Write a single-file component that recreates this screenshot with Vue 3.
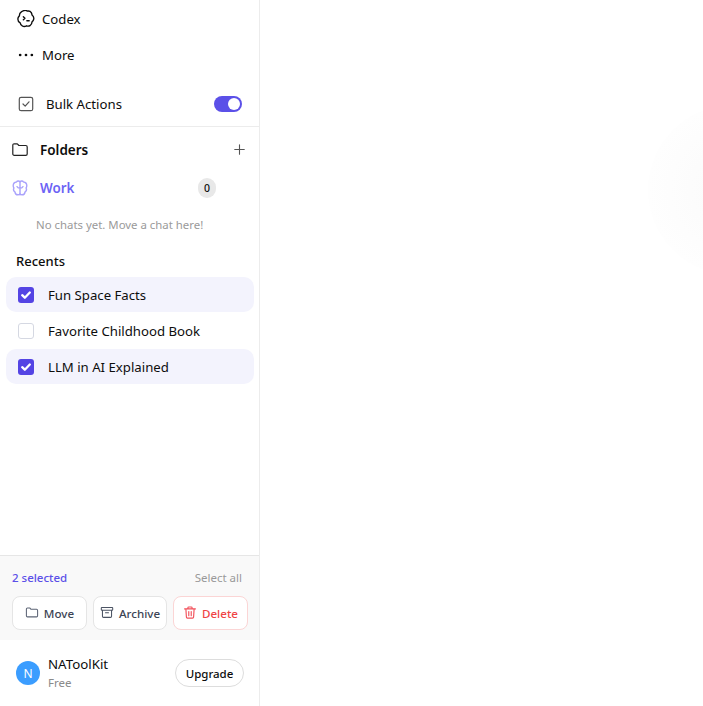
<template>
  <div class="page">
    <aside class="sidebar">
      <div class="nav-top">
        <div class="nav-row">
          <svg class="nav-icon" viewBox="1.500 1.500 17 17" fill="none" stroke="#0d0d0d" stroke-width="1.300" stroke-linejoin="round" stroke-linecap="round">
            <path d="M7.200 2.400c1.500-.9 3-.6 4.200.1 1.200-.2 2.800.2 3.600 1.500.5.900.6 1.600.7 2.300 1.200 1 1.900 2.300 1.600 3.800-.2 1.200-.9 2-1.700 2.700.1 1.400-.6 2.700-1.800 3.400-1.100.7-2.300.6-3.300.2-1.200.8-2.700.9-4 .2-1.200-.6-1.800-1.700-2-2.900C3.300 13 2.300 11.600 2.300 10c0-1.300.7-2.300 1.500-3.100-.1-1.400.6-2.800 1.800-3.600.5-.4 1-.6 1.600-.9z" />
            <path d="M7.500 7.800l1.500 1.500-1.500 1.500M10.800 11.600h2.200" />
          </svg>
          <span>Codex</span>
        </div>
        <div class="nav-row">
          <svg class="nav-icon" viewBox="0 0 20 20" fill="#0d0d0d">
            <circle cx="3.500" cy="10" r="1.500" />
            <circle cx="10" cy="10" r="1.500" />
            <circle cx="16.500" cy="10" r="1.500" />
          </svg>
          <span>More</span>
        </div>
      </div>

      <div class="bulk-row">
        <svg class="bulk-icon" viewBox="0 0 16 16" fill="none" stroke="#555" stroke-width="1.200" stroke-linecap="round" stroke-linejoin="round">
          <rect x="1.300" y="1.300" width="13.400" height="13.400" rx="1.800" />
          <path d="M5 8l2.200 2.200L11 5.800" />
        </svg>
        <span class="bulk-label">Bulk Actions</span>
        <span class="toggle"><span class="knob"></span></span>
      </div>

      <div class="folders">
        <div class="folders-head">
          <svg class="folder-icon" viewBox="0 0 16 16" fill="none" stroke="#222" stroke-width="1.200" stroke-linejoin="round">
            <path d="M.8 3.200c0-.8.600-1.400 1.400-1.400h3.100l1.600 1.700h6.900c.8 0 1.400.6 1.400 1.400v7c0 .8-.6 1.400-1.400 1.400H2.200c-.8 0-1.400-.6-1.400-1.400z" />
          </svg>
          <strong class="folders-title">Folders</strong>
          <svg class="plus" viewBox="0 0 12 12" fill="none" stroke="#555" stroke-width="1.200" stroke-linecap="round">
            <path d="M6 .8v10.400M.8 6h10.400" />
          </svg>
        </div>
        <div class="folder-row">
          <svg class="folder-icon" viewBox="0 0 16 16" fill="none" stroke="#a9a2fb" stroke-width="1.400" stroke-linecap="round" stroke-linejoin="round">
            <path d="M8 1.800C7.200 .7 5.200 .7 4.500 2 2.700 2.200 1.200 3.700 1.200 5.800c0 .9.300 1.600.7 2.200-.6 1.300-.2 3.100 1 3.800.2 1.700 1.500 3 3 3 .9 0 1.700-.4 2.100-1 .4.600 1.200 1 2.100 1 1.500 0 2.800-1.300 3-3 1.200-.7 1.600-2.500 1-3.800.4-.6.700-1.300.7-2.200 0-2.100-1.500-3.600-3.300-3.800C10.800 .7 8.800 .7 8 1.800z" />
            <path d="M8 1.800v12.900M5 6.600c.4 1.100 1.500 1.700 3 1.700s2.600-.6 3-1.700" />
          </svg>
          <strong class="work">Work</strong>
          <span class="count">0</span>
        </div>
        <p class="empty">No chats yet. Move a chat here!</p>
      </div>

      <h3 class="recents-title">Recents</h3>
      <ul class="chats">
        <li v-for="chat in chats" :key="chat.title" class="chat" :class="{ selected: chat.selected }">
          <span class="check">
            <svg v-if="chat.selected" viewBox="0 0 16 16" fill="none" stroke="#fff" stroke-width="2.300" stroke-linecap="round" stroke-linejoin="round">
              <path d="M4.200 8.200l2.600 2.500 5-5.200" />
            </svg>
          </span>
          <span>{{ chat.title }}</span>
        </li>
      </ul>

      <div class="bulk-bar">
        <div class="bulk-info">
          <span class="selected-count">2 selected</span>
          <span class="select-all">Select all</span>
        </div>
        <div class="bulk-buttons">
          <button class="action move">
            <svg viewBox="0 0 16 16" fill="none" stroke="#5c6475" stroke-width="1.200" stroke-linejoin="round">
              <path d="M1.600 3.400c0-.7.500-1.200 1.200-1.200h2.600l1.500 1.600h6.300c.7 0 1.200.5 1.200 1.200v6.200c0 .7-.5 1.200-1.200 1.200H2.800c-.7 0-1.200-.5-1.200-1.200z" />
            </svg>
            Move
          </button>
          <button class="action archive">
            <svg viewBox="0 0 16 16" fill="none" stroke="#4b5363" stroke-width="1.200" stroke-linejoin="round" stroke-linecap="round">
              <rect x="1.500" y="1.800" width="13" height="3" rx=".6" />
              <path d="M2.800 4.800v7c0 .7.500 1.200 1.200 1.200h8c.7 0 1.200-.5 1.200-1.200v-7M6.300 7.800h3.400" />
            </svg>
            Archive
          </button>
          <button class="action delete">
            <svg viewBox="0 0 16 16" fill="none" stroke="#f2505a" stroke-width="1.300" stroke-linejoin="round" stroke-linecap="round">
              <path d="M1.800 3.300h12.400M5.600 3.300V2.100c0-.6.400-1 1-1h2.800c.6 0 1 .4 1 1v1.200M3.300 3.300l.6 9.400c0 .7.500 1.200 1.200 1.200h5.800c.7 0 1.200-.5 1.200-1.200l.6-9.400M6.600 6.300v4.800M9.400 6.300v4.800" />
            </svg>
            Delete
          </button>
        </div>
      </div>

      <div class="account">
        <span class="avatar">N</span>
        <div class="account-text">
          <span class="account-name">NAToolKit</span>
          <span class="account-plan">Free</span>
        </div>
        <button class="upgrade">Upgrade</button>
      </div>
    </aside>
    <main class="content">
      <div class="glow"></div>
    </main>
  </div>
</template>

<script setup>
import { ref } from 'vue';

const chats = ref([
  { title: 'Fun Space Facts', selected: true },
  { title: 'Favorite Childhood Book', selected: false },
  { title: 'LLM in AI Explained', selected: true },
]);
</script>

<style>
html, body {
  margin: 0;
  background: #fff;
}
</style>

<style scoped>
.page {
  display: flex;
  width: 703px;
  height: 706px;
  overflow: hidden;
  font-family: "Noto Sans", "Open Sans", sans-serif;
  font-size: 13.200px;
  color: #0d0d0d;
}

.sidebar {
  display: flex;
  flex-direction: column;
  width: 260px;
  flex-shrink: 0;
  box-sizing: border-box;
  border-right: 1px solid #ececec;
  background: #fff;
}

.nav-top {
  padding-top: 1px;
}

.nav-row {
  display: flex;
  align-items: center;
  gap: 7px;
  height: 36px;
  padding-left: 17px;
}

.nav-icon {
  width: 18px;
  height: 18px;
}

.bulk-row {
  display: flex;
  align-items: center;
  height: 41px;
  margin-top: 13px;
  padding: 0 17px 4px 18px;
  box-sizing: border-box;
  border-bottom: 1px solid #ececec;
}

.bulk-icon {
  width: 16px;
  height: 16px;
}

.bulk-label {
  margin-left: 12px;
  flex: 1;
}

.toggle {
  display: flex;
  justify-content: flex-end;
  align-items: center;
  width: 28px;
  height: 16px;
  padding: 2px;
  box-sizing: border-box;
  border-radius: 8px;
  background: #5b50e8;
}

.knob {
  width: 12px;
  height: 12px;
  border-radius: 50%;
  background: #fff;
}

.folders-head {
  display: flex;
  align-items: center;
  height: 38px;
  padding: 4px 14px 0 12px;
}

.folder-icon {
  width: 16px;
  height: 16px;
}

.folders-title {
  margin-left: 12px;
  flex: 1;
  font-size: 13.500px;
  font-weight: 600;
}

.plus {
  width: 11px;
  height: 11px;
  margin-bottom: 2px;
}

.folder-row {
  display: flex;
  align-items: center;
  height: 38px;
  padding: 0 43px 0 12px;
}

.work {
  flex: 1;
  margin-left: 12px;
  font-size: 13.400px;
  font-weight: 600;
  color: #6c63f5;
}

.count {
  display: flex;
  align-items: center;
  justify-content: center;
  width: 18px;
  height: 20px;
  border-radius: 10px;
  background: #e8e8e8;
  font-size: 10.500px;
  font-weight: 500;
}

.empty {
  margin: 9px 0 0;
  padding-left: 36px;
  font-size: 11.400px;
  line-height: 18px;
  color: #9a9a9a;
}

.recents-title {
  margin: 18px 0 0;
  padding-left: 16px;
  font-size: 13px;
  line-height: 18px;
  font-weight: 500;
}

.chats {
  list-style: none;
  margin: 7px 0 0;
  padding: 0 5px 0 6px;
  flex: 1;
}

.chat {
  display: flex;
  align-items: center;
  gap: 14px;
  height: 35px;
  margin-bottom: 1px;
  padding-left: 12px;
  border-radius: 10px;
}

.chat.selected {
  background: #f3f3fd;
}

.check {
  display: flex;
  width: 16px;
  height: 16px;
  box-sizing: border-box;
  border: 1px solid #d5d8e2;
  border-radius: 3px;
  background: #fff;
}

.selected .check {
  border: none;
  background: #5444e4;
}

.bulk-bar {
  height: 85px;
  box-sizing: border-box;
  padding: 13px 11px 0 12px;
  border-top: 1px solid #e6e6e6;
  background: #f9f9f9;
}

.bulk-info {
  display: flex;
  justify-content: space-between;
  align-items: center;
  padding-right: 6px;
  line-height: 18px;
  font-size: 11.500px;
}

.selected-count {
  font-weight: 500;
  color: #5b50e8;
}

.select-all {
  color: #999;
}

.bulk-buttons {
  display: flex;
  gap: 6px;
  margin-top: 9px;
}

.action {
  display: flex;
  align-items: center;
  justify-content: center;
  flex-shrink: 0;
  gap: 5px;
  height: 34px;
  padding: 0;
  border: 1px solid #e5e5e5;
  border-radius: 8px;
  background: #fff;
  font-family: inherit;
  font-size: 11.600px;
  font-weight: 500;
  color: #3c4454;
}

.action svg {
  width: 14px;
  height: 14px;
}

.move {
  width: 75px;
}

.archive {
  width: 74px;
}

.delete {
  width: 75px;
  border-color: #fbd5d5;
  color: #ef4444;
}

.account {
  display: flex;
  align-items: center;
  height: 66px;
  box-sizing: border-box;
  padding: 0 15px 0 16px;
}

.avatar {
  display: flex;
  align-items: center;
  justify-content: center;
  width: 24px;
  height: 24px;
  border-radius: 50%;
  background: #3b9dff;
  color: #fff;
  font-size: 12px;
}

.account-text {
  display: flex;
  flex-direction: column;
  flex: 1;
  margin-left: 8px;
}

.account-name {
  font-size: 13.300px;
  line-height: 18px;
}

.account-plan {
  font-size: 11.500px;
  line-height: 16px;
  margin-top: 2px;
  color: #8a8a8a;
}

.upgrade {
  width: 69px;
  height: 28px;
  padding: 0;
  border: 1px solid #ddd;
  border-radius: 14px;
  background: #fff;
  font-family: inherit;
  font-size: 11.500px;
  font-weight: 500;
  color: #0d0d0d;
}

.content {
  position: relative;
  flex: 1;
  background: #fff;
}

.glow {
  position: absolute;
  top: 105px;
  right: -115px;
  width: 170px;
  height: 170px;
  border-radius: 50%;
  background: radial-gradient(circle closest-side, #fafafa, #fefefe);
}
</style>
